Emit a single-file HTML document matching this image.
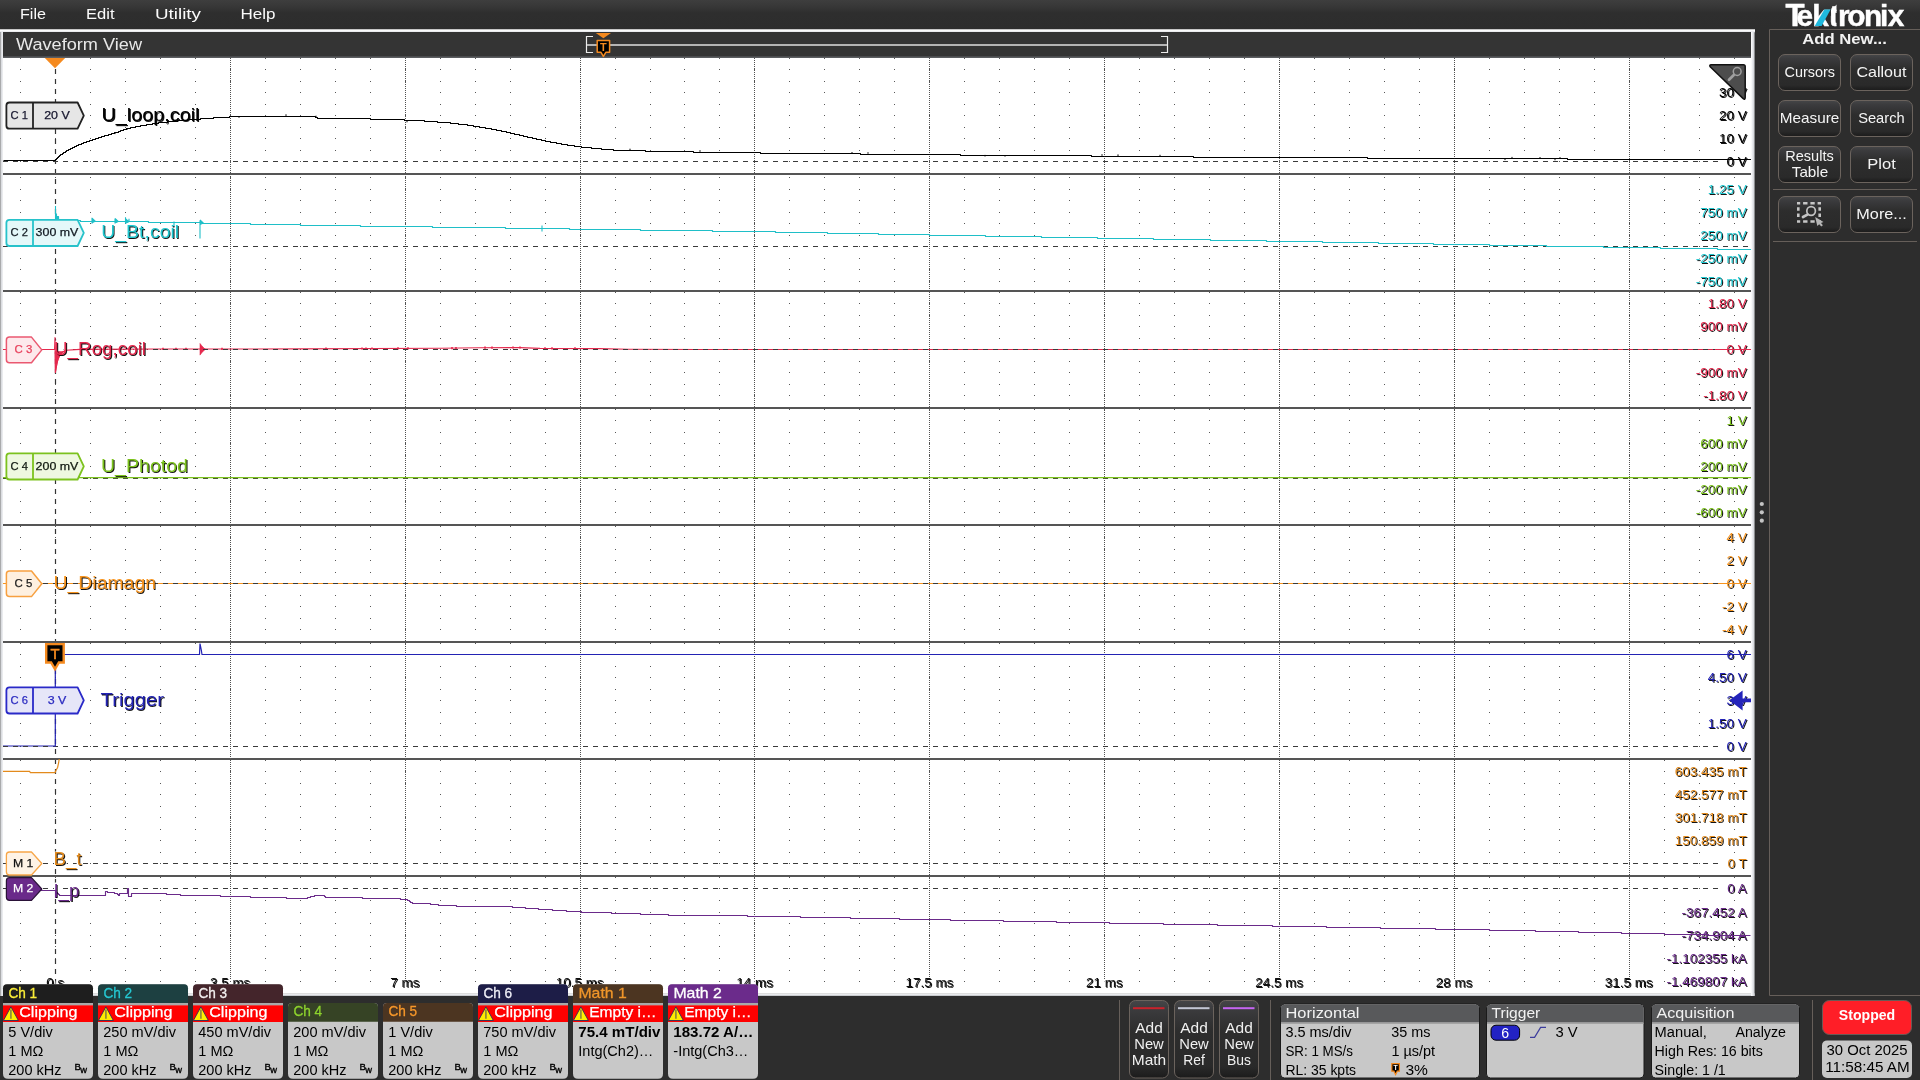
<!DOCTYPE html>
<html lang="en"><head><meta charset="utf-8"><title>Waveform View</title>
<style>
html,body{margin:0;padding:0;background:#2d2d2d;width:1920px;height:1080px;overflow:hidden}
svg{display:block;position:absolute;left:0;top:0;will-change:transform}
text{font-family:"Liberation Sans","DejaVu Sans",sans-serif;white-space:pre}
</style></head><body>
<svg width="1920" height="1080" viewBox="0 0 1920 1080">
<defs>
<linearGradient id="gMenu" x1="0" y1="0" x2="0" y2="1"><stop offset="0" stop-color="#3e3e3e"/><stop offset="0.2" stop-color="#383838"/><stop offset="0.45" stop-color="#2e2e2e"/><stop offset="1" stop-color="#2d2d2d"/></linearGradient>
<linearGradient id="gBtn" x1="0" y1="0" x2="0" y2="1"><stop offset="0" stop-color="#454648"/><stop offset="0.12" stop-color="#3b3b3d"/><stop offset="0.4" stop-color="#2d2d2d"/><stop offset="0.85" stop-color="#2a2a2a"/><stop offset="1" stop-color="#1b1b1b"/></linearGradient>
<linearGradient id="gTop" x1="0" y1="0" x2="0" y2="1"><stop offset="0" stop-color="#9a9a9a"/><stop offset="0.35" stop-color="#ffffff"/><stop offset="1" stop-color="#dfe1e6"/></linearGradient>
<linearGradient id="gLeft" x1="0" y1="0" x2="1" y2="0"><stop offset="0" stop-color="#8c8c8c"/><stop offset="0.4" stop-color="#d8dade"/><stop offset="1" stop-color="#f4f5f7"/></linearGradient>
<linearGradient id="gRight" x1="0" y1="0" x2="1" y2="0"><stop offset="0" stop-color="#ffffff"/><stop offset="0.5" stop-color="#e4e6ea"/><stop offset="1" stop-color="#c8cace"/></linearGradient>
<linearGradient id="gBot" x1="0" y1="0" x2="0" y2="1"><stop offset="0" stop-color="#ffffff"/><stop offset="0.5" stop-color="#e4e6ea"/><stop offset="1" stop-color="#b8babd"/></linearGradient>
<clipPath id="cpPlot"><rect x="3" y="58" width="1748" height="936"/></clipPath>
</defs>
<rect x="0" y="0" width="1920" height="1080" fill="#2d2d2d"/>
<g id="menu-bar">
<rect x="0" y="0" width="1920" height="29" fill="url(#gMenu)"/>
<text x="20" y="18.8" font-size="15.18" fill="#fafafa" textLength="26" lengthAdjust="spacingAndGlyphs">File</text>
<text x="86" y="18.8" font-size="15.18" fill="#fafafa" textLength="28.5" lengthAdjust="spacingAndGlyphs">Edit</text>
<text x="155" y="18.8" font-size="15.18" fill="#fafafa" textLength="46" lengthAdjust="spacingAndGlyphs">Utility</text>
<text x="240.5" y="18.8" font-size="15.18" fill="#fafafa" textLength="35" lengthAdjust="spacingAndGlyphs">Help</text>
</g>
<g id="waveform-view">
<rect x="0" y="993.4" width="1754.6" height="2.6" fill="url(#gBot)"/>
<rect x="0" y="29" width="1755" height="3.3" fill="url(#gTop)"/>
<rect x="0" y="32" width="3.2" height="964" fill="url(#gLeft)"/>
<rect x="1751" y="32" width="3.6" height="964" fill="url(#gRight)"/>
<rect x="3" y="32" width="1748" height="25" fill="#343434"/>
<rect x="3" y="56.4" width="1748" height="1.6" fill="#5b5d60"/>
<rect x="3" y="58" width="1748" height="935.6" fill="#ffffff"/>
<text x="16" y="50" font-size="17.16" fill="#e8e8e8" textLength="126" lengthAdjust="spacingAndGlyphs">Waveform View</text>
<path d="M593,36.5H586.5V52.5H593" fill="none" stroke="#ececec" stroke-width="1.2"/>
<path d="M1161,36.5H1167.5V52.5H1161" fill="none" stroke="#ececec" stroke-width="1.2"/>
<rect x="587" y="44" width="580" height="2" fill="#b4b4b4"/>
<path d="M595.8,33H611L603.4,38.2Z" fill="#f58a1f"/>
<path d="M597.2,40.6H609.6V52.2H606L603.4,56.4L600.8,52.2H597.2Z" fill="#000" stroke="#f58a1f" stroke-width="1.5" stroke-linejoin="round"/>
<text x="603.4" y="50.6" font-size="10.92" fill="#f58a1f" text-anchor="middle" font-weight="700">T</text>
<g clip-path="url(#cpPlot)">
<path id="dr" d="M20,58.5h1m34,0h1m34,0h1m34,0h1m34,0h1m34,0h1m34,0h1m34,0h1m34,0h1m34,0h1m34,0h1m34,0h1m34,0h1m34,0h1m34,0h1m34,0h1m34,0h1m34,0h1m34,0h1m33,0h1m34,0h1m34,0h1m34,0h1m34,0h1m34,0h1m34,0h1m34,0h1m34,0h1m34,0h1m34,0h1m34,0h1m34,0h1m34,0h1m34,0h1m34,0h1m34,0h1m34,0h1m34,0h1m34,0h1m34,0h1m34,0h1m34,0h1m34,0h1m34,0h1m34,0h1m34,0h1m34,0h1m34,0h1m34,0h1m34,0h1" stroke="#585858" stroke-width="1" fill="none" shape-rendering="crispEdges"/>
<use href="#dr" y="11"/>
<use href="#dr" y="23"/>
<use href="#dr" y="34"/>
<use href="#dr" y="46"/>
<use href="#dr" y="57"/>
<use href="#dr" y="69"/>
<use href="#dr" y="80"/>
<use href="#dr" y="92"/>
<use href="#dr" y="103"/>
<use href="#dr" y="115"/>
<use href="#dr" y="119"/>
<use href="#dr" y="131"/>
<use href="#dr" y="142"/>
<use href="#dr" y="154"/>
<use href="#dr" y="165"/>
<use href="#dr" y="177"/>
<use href="#dr" y="188"/>
<use href="#dr" y="200"/>
<use href="#dr" y="211"/>
<use href="#dr" y="223"/>
<use href="#dr" y="234"/>
<use href="#dr" y="245"/>
<use href="#dr" y="257"/>
<use href="#dr" y="268"/>
<use href="#dr" y="280"/>
<use href="#dr" y="291"/>
<use href="#dr" y="303"/>
<use href="#dr" y="314"/>
<use href="#dr" y="326"/>
<use href="#dr" y="337"/>
<use href="#dr" y="349"/>
<use href="#dr" y="351"/>
<use href="#dr" y="362"/>
<use href="#dr" y="374"/>
<use href="#dr" y="385"/>
<use href="#dr" y="397"/>
<use href="#dr" y="408"/>
<use href="#dr" y="420"/>
<use href="#dr" y="431"/>
<use href="#dr" y="443"/>
<use href="#dr" y="454"/>
<use href="#dr" y="466"/>
<use href="#dr" y="468"/>
<use href="#dr" y="479"/>
<use href="#dr" y="491"/>
<use href="#dr" y="502"/>
<use href="#dr" y="514"/>
<use href="#dr" y="525"/>
<use href="#dr" y="537"/>
<use href="#dr" y="548"/>
<use href="#dr" y="560"/>
<use href="#dr" y="571"/>
<use href="#dr" y="583"/>
<use href="#dr" y="585"/>
<use href="#dr" y="596"/>
<use href="#dr" y="608"/>
<use href="#dr" y="619"/>
<use href="#dr" y="631"/>
<use href="#dr" y="642"/>
<use href="#dr" y="654"/>
<use href="#dr" y="665"/>
<use href="#dr" y="677"/>
<use href="#dr" y="688"/>
<use href="#dr" y="700"/>
<use href="#dr" y="702"/>
<use href="#dr" y="713"/>
<use href="#dr" y="725"/>
<use href="#dr" y="736"/>
<use href="#dr" y="748"/>
<use href="#dr" y="759"/>
<use href="#dr" y="771"/>
<use href="#dr" y="782"/>
<use href="#dr" y="794"/>
<use href="#dr" y="805"/>
<use href="#dr" y="817"/>
<use href="#dr" y="819"/>
<use href="#dr" y="830"/>
<use href="#dr" y="842"/>
<use href="#dr" y="854"/>
<use href="#dr" y="865"/>
<use href="#dr" y="877"/>
<use href="#dr" y="888"/>
<use href="#dr" y="900"/>
<use href="#dr" y="912"/>
<use href="#dr" y="923"/>
<path d="M230.5,58V979M405.5,58V979M580.5,58V979M754.5,58V979M929.5,58V979M1104.5,58V979M1279.5,58V979M1454.5,58V979M1629.5,58V979" stroke="#505050" stroke-width="1" stroke-dasharray="1 1" fill="none" shape-rendering="crispEdges"/>
<path d="M55.5,69V993" stroke="#333" stroke-width="1.2" stroke-dasharray="5 5" fill="none"/>
<rect x="3" y="173" width="1748" height="2" fill="#555555"/>
<rect x="3" y="290" width="1748" height="2" fill="#555555"/>
<rect x="3" y="407" width="1748" height="2" fill="#555555"/>
<rect x="3" y="524" width="1748" height="2" fill="#555555"/>
<rect x="3" y="641" width="1748" height="2" fill="#555555"/>
<rect x="3" y="758" width="1748" height="2" fill="#555555"/>
<rect x="3" y="875" width="1748" height="2" fill="#555555"/>
<path d="M44.8,58H65.2L55,68.2Z" fill="#f58a1f"/>
</g>
<g clip-path="url(#cpPlot)">
<path d="M3,161.5H1718M3,246.5H1751M3,349.5H1718M3,478.5H1751M3,583.5H1718M3,746.5H1718M3,863.5H1718M3,888.5H1718" stroke="#3a3a3a" stroke-width="1" stroke-dasharray="5 5" fill="none" shape-rendering="crispEdges"/>
</g>
<g>
<text x="1747.25" y="97.55" font-size="13.1" text-anchor="end" textLength="27.735" lengthAdjust="spacingAndGlyphs" fill="#fff" stroke="#fff" stroke-width="3.4" stroke-linejoin="round" aria-hidden="true">30 V</text>
<text x="1747.7" y="98" font-size="13.1" text-anchor="end" textLength="27.735" lengthAdjust="spacingAndGlyphs" fill="#000" fill-opacity="0.92" aria-hidden="true">30 V</text>
<text x="1746.8" y="97.1" font-size="13.1" text-anchor="end" textLength="27.735" lengthAdjust="spacingAndGlyphs" fill="#000000">30 V</text>
<text x="1747.25" y="120.55" font-size="13.1" text-anchor="end" textLength="27.735" lengthAdjust="spacingAndGlyphs" fill="#fff" stroke="#fff" stroke-width="3.4" stroke-linejoin="round" aria-hidden="true">20 V</text>
<text x="1747.7" y="121" font-size="13.1" text-anchor="end" textLength="27.735" lengthAdjust="spacingAndGlyphs" fill="#000" fill-opacity="0.92" aria-hidden="true">20 V</text>
<text x="1746.8" y="120.1" font-size="13.1" text-anchor="end" textLength="27.735" lengthAdjust="spacingAndGlyphs" fill="#000000">20 V</text>
<text x="1747.25" y="143.55" font-size="13.1" text-anchor="end" textLength="27.735" lengthAdjust="spacingAndGlyphs" fill="#fff" stroke="#fff" stroke-width="3.4" stroke-linejoin="round" aria-hidden="true">10 V</text>
<text x="1747.7" y="144" font-size="13.1" text-anchor="end" textLength="27.735" lengthAdjust="spacingAndGlyphs" fill="#000" fill-opacity="0.92" aria-hidden="true">10 V</text>
<text x="1746.8" y="143.1" font-size="13.1" text-anchor="end" textLength="27.735" lengthAdjust="spacingAndGlyphs" fill="#000000">10 V</text>
<text x="1747.25" y="166.55" font-size="13.1" text-anchor="end" textLength="20.2367" lengthAdjust="spacingAndGlyphs" fill="#fff" stroke="#fff" stroke-width="3.4" stroke-linejoin="round" aria-hidden="true">0 V</text>
<text x="1747.7" y="167" font-size="13.1" text-anchor="end" textLength="20.2367" lengthAdjust="spacingAndGlyphs" fill="#000" fill-opacity="0.92" aria-hidden="true">0 V</text>
<text x="1746.8" y="166.1" font-size="13.1" text-anchor="end" textLength="20.2367" lengthAdjust="spacingAndGlyphs" fill="#000000">0 V</text>
<text x="1747.25" y="194.55" font-size="13.1" text-anchor="end" textLength="38.9788" lengthAdjust="spacingAndGlyphs" fill="#fff" stroke="#fff" stroke-width="3.4" stroke-linejoin="round" aria-hidden="true">1.25 V</text>
<text x="1747.7" y="195" font-size="13.1" text-anchor="end" textLength="38.9788" lengthAdjust="spacingAndGlyphs" fill="#000" fill-opacity="0.92" aria-hidden="true">1.25 V</text>
<text x="1746.8" y="194.1" font-size="13.1" text-anchor="end" textLength="38.9788" lengthAdjust="spacingAndGlyphs" fill="#1fc6ce">1.25 V</text>
<text x="1747.25" y="217.55" font-size="13.1" text-anchor="end" textLength="46.4644" lengthAdjust="spacingAndGlyphs" fill="#fff" stroke="#fff" stroke-width="3.4" stroke-linejoin="round" aria-hidden="true">750 mV</text>
<text x="1747.7" y="218" font-size="13.1" text-anchor="end" textLength="46.4644" lengthAdjust="spacingAndGlyphs" fill="#000" fill-opacity="0.92" aria-hidden="true">750 mV</text>
<text x="1746.8" y="217.1" font-size="13.1" text-anchor="end" textLength="46.4644" lengthAdjust="spacingAndGlyphs" fill="#1fc6ce">750 mV</text>
<text x="1747.25" y="240.55" font-size="13.1" text-anchor="end" textLength="46.4644" lengthAdjust="spacingAndGlyphs" fill="#fff" stroke="#fff" stroke-width="3.4" stroke-linejoin="round" aria-hidden="true">250 mV</text>
<text x="1747.7" y="241" font-size="13.1" text-anchor="end" textLength="46.4644" lengthAdjust="spacingAndGlyphs" fill="#000" fill-opacity="0.92" aria-hidden="true">250 mV</text>
<text x="1746.8" y="240.1" font-size="13.1" text-anchor="end" textLength="46.4644" lengthAdjust="spacingAndGlyphs" fill="#1fc6ce">250 mV</text>
<text x="1747.25" y="263.55" font-size="13.1" text-anchor="end" textLength="50.9546" lengthAdjust="spacingAndGlyphs" fill="#fff" stroke="#fff" stroke-width="3.4" stroke-linejoin="round" aria-hidden="true">-250 mV</text>
<text x="1747.7" y="264" font-size="13.1" text-anchor="end" textLength="50.9546" lengthAdjust="spacingAndGlyphs" fill="#000" fill-opacity="0.92" aria-hidden="true">-250 mV</text>
<text x="1746.8" y="263.1" font-size="13.1" text-anchor="end" textLength="50.9546" lengthAdjust="spacingAndGlyphs" fill="#1fc6ce">-250 mV</text>
<text x="1747.25" y="286.55" font-size="13.1" text-anchor="end" textLength="50.9546" lengthAdjust="spacingAndGlyphs" fill="#fff" stroke="#fff" stroke-width="3.4" stroke-linejoin="round" aria-hidden="true">-750 mV</text>
<text x="1747.7" y="287" font-size="13.1" text-anchor="end" textLength="50.9546" lengthAdjust="spacingAndGlyphs" fill="#000" fill-opacity="0.92" aria-hidden="true">-750 mV</text>
<text x="1746.8" y="286.1" font-size="13.1" text-anchor="end" textLength="50.9546" lengthAdjust="spacingAndGlyphs" fill="#1fc6ce">-750 mV</text>
<text x="1747.25" y="308.55" font-size="13.1" text-anchor="end" textLength="38.9788" lengthAdjust="spacingAndGlyphs" fill="#fff" stroke="#fff" stroke-width="3.4" stroke-linejoin="round" aria-hidden="true">1.80 V</text>
<text x="1747.7" y="309" font-size="13.1" text-anchor="end" textLength="38.9788" lengthAdjust="spacingAndGlyphs" fill="#000" fill-opacity="0.92" aria-hidden="true">1.80 V</text>
<text x="1746.8" y="308.1" font-size="13.1" text-anchor="end" textLength="38.9788" lengthAdjust="spacingAndGlyphs" fill="#e5294e">1.80 V</text>
<text x="1747.25" y="331.55" font-size="13.1" text-anchor="end" textLength="46.4644" lengthAdjust="spacingAndGlyphs" fill="#fff" stroke="#fff" stroke-width="3.4" stroke-linejoin="round" aria-hidden="true">900 mV</text>
<text x="1747.7" y="332" font-size="13.1" text-anchor="end" textLength="46.4644" lengthAdjust="spacingAndGlyphs" fill="#000" fill-opacity="0.92" aria-hidden="true">900 mV</text>
<text x="1746.8" y="331.1" font-size="13.1" text-anchor="end" textLength="46.4644" lengthAdjust="spacingAndGlyphs" fill="#e5294e">900 mV</text>
<text x="1747.25" y="354.55" font-size="13.1" text-anchor="end" textLength="20.2367" lengthAdjust="spacingAndGlyphs" fill="#fff" stroke="#fff" stroke-width="3.4" stroke-linejoin="round" aria-hidden="true">0 V</text>
<text x="1747.7" y="355" font-size="13.1" text-anchor="end" textLength="20.2367" lengthAdjust="spacingAndGlyphs" fill="#000" fill-opacity="0.92" aria-hidden="true">0 V</text>
<text x="1746.8" y="354.1" font-size="13.1" text-anchor="end" textLength="20.2367" lengthAdjust="spacingAndGlyphs" fill="#e5294e">0 V</text>
<text x="1747.25" y="377.55" font-size="13.1" text-anchor="end" textLength="50.9546" lengthAdjust="spacingAndGlyphs" fill="#fff" stroke="#fff" stroke-width="3.4" stroke-linejoin="round" aria-hidden="true">-900 mV</text>
<text x="1747.7" y="378" font-size="13.1" text-anchor="end" textLength="50.9546" lengthAdjust="spacingAndGlyphs" fill="#000" fill-opacity="0.92" aria-hidden="true">-900 mV</text>
<text x="1746.8" y="377.1" font-size="13.1" text-anchor="end" textLength="50.9546" lengthAdjust="spacingAndGlyphs" fill="#e5294e">-900 mV</text>
<text x="1747.25" y="400.55" font-size="13.1" text-anchor="end" textLength="43.4689" lengthAdjust="spacingAndGlyphs" fill="#fff" stroke="#fff" stroke-width="3.4" stroke-linejoin="round" aria-hidden="true">-1.80 V</text>
<text x="1747.7" y="401" font-size="13.1" text-anchor="end" textLength="43.4689" lengthAdjust="spacingAndGlyphs" fill="#000" fill-opacity="0.92" aria-hidden="true">-1.80 V</text>
<text x="1746.8" y="400.1" font-size="13.1" text-anchor="end" textLength="43.4689" lengthAdjust="spacingAndGlyphs" fill="#e5294e">-1.80 V</text>
<text x="1747.25" y="425.55" font-size="13.1" text-anchor="end" textLength="20.2367" lengthAdjust="spacingAndGlyphs" fill="#fff" stroke="#fff" stroke-width="3.4" stroke-linejoin="round" aria-hidden="true">1 V</text>
<text x="1747.7" y="426" font-size="13.1" text-anchor="end" textLength="20.2367" lengthAdjust="spacingAndGlyphs" fill="#000" fill-opacity="0.92" aria-hidden="true">1 V</text>
<text x="1746.8" y="425.1" font-size="13.1" text-anchor="end" textLength="20.2367" lengthAdjust="spacingAndGlyphs" fill="#7cc21e">1 V</text>
<text x="1747.25" y="448.55" font-size="13.1" text-anchor="end" textLength="46.4644" lengthAdjust="spacingAndGlyphs" fill="#fff" stroke="#fff" stroke-width="3.4" stroke-linejoin="round" aria-hidden="true">600 mV</text>
<text x="1747.7" y="449" font-size="13.1" text-anchor="end" textLength="46.4644" lengthAdjust="spacingAndGlyphs" fill="#000" fill-opacity="0.92" aria-hidden="true">600 mV</text>
<text x="1746.8" y="448.1" font-size="13.1" text-anchor="end" textLength="46.4644" lengthAdjust="spacingAndGlyphs" fill="#7cc21e">600 mV</text>
<text x="1747.25" y="471.55" font-size="13.1" text-anchor="end" textLength="46.4644" lengthAdjust="spacingAndGlyphs" fill="#fff" stroke="#fff" stroke-width="3.4" stroke-linejoin="round" aria-hidden="true">200 mV</text>
<text x="1747.7" y="472" font-size="13.1" text-anchor="end" textLength="46.4644" lengthAdjust="spacingAndGlyphs" fill="#000" fill-opacity="0.92" aria-hidden="true">200 mV</text>
<text x="1746.8" y="471.1" font-size="13.1" text-anchor="end" textLength="46.4644" lengthAdjust="spacingAndGlyphs" fill="#7cc21e">200 mV</text>
<text x="1747.25" y="494.55" font-size="13.1" text-anchor="end" textLength="50.9546" lengthAdjust="spacingAndGlyphs" fill="#fff" stroke="#fff" stroke-width="3.4" stroke-linejoin="round" aria-hidden="true">-200 mV</text>
<text x="1747.7" y="495" font-size="13.1" text-anchor="end" textLength="50.9546" lengthAdjust="spacingAndGlyphs" fill="#000" fill-opacity="0.92" aria-hidden="true">-200 mV</text>
<text x="1746.8" y="494.1" font-size="13.1" text-anchor="end" textLength="50.9546" lengthAdjust="spacingAndGlyphs" fill="#7cc21e">-200 mV</text>
<text x="1747.25" y="517.55" font-size="13.1" text-anchor="end" textLength="50.9546" lengthAdjust="spacingAndGlyphs" fill="#fff" stroke="#fff" stroke-width="3.4" stroke-linejoin="round" aria-hidden="true">-600 mV</text>
<text x="1747.7" y="518" font-size="13.1" text-anchor="end" textLength="50.9546" lengthAdjust="spacingAndGlyphs" fill="#000" fill-opacity="0.92" aria-hidden="true">-600 mV</text>
<text x="1746.8" y="517.1" font-size="13.1" text-anchor="end" textLength="50.9546" lengthAdjust="spacingAndGlyphs" fill="#7cc21e">-600 mV</text>
<text x="1747.25" y="542.55" font-size="13.1" text-anchor="end" textLength="20.2367" lengthAdjust="spacingAndGlyphs" fill="#fff" stroke="#fff" stroke-width="3.4" stroke-linejoin="round" aria-hidden="true">4 V</text>
<text x="1747.7" y="543" font-size="13.1" text-anchor="end" textLength="20.2367" lengthAdjust="spacingAndGlyphs" fill="#000" fill-opacity="0.92" aria-hidden="true">4 V</text>
<text x="1746.8" y="542.1" font-size="13.1" text-anchor="end" textLength="20.2367" lengthAdjust="spacingAndGlyphs" fill="#f7941e">4 V</text>
<text x="1747.25" y="565.55" font-size="13.1" text-anchor="end" textLength="20.2367" lengthAdjust="spacingAndGlyphs" fill="#fff" stroke="#fff" stroke-width="3.4" stroke-linejoin="round" aria-hidden="true">2 V</text>
<text x="1747.7" y="566" font-size="13.1" text-anchor="end" textLength="20.2367" lengthAdjust="spacingAndGlyphs" fill="#000" fill-opacity="0.92" aria-hidden="true">2 V</text>
<text x="1746.8" y="565.1" font-size="13.1" text-anchor="end" textLength="20.2367" lengthAdjust="spacingAndGlyphs" fill="#f7941e">2 V</text>
<text x="1747.25" y="588.55" font-size="13.1" text-anchor="end" textLength="20.2367" lengthAdjust="spacingAndGlyphs" fill="#fff" stroke="#fff" stroke-width="3.4" stroke-linejoin="round" aria-hidden="true">0 V</text>
<text x="1747.7" y="589" font-size="13.1" text-anchor="end" textLength="20.2367" lengthAdjust="spacingAndGlyphs" fill="#000" fill-opacity="0.92" aria-hidden="true">0 V</text>
<text x="1746.8" y="588.1" font-size="13.1" text-anchor="end" textLength="20.2367" lengthAdjust="spacingAndGlyphs" fill="#f7941e">0 V</text>
<text x="1747.25" y="611.55" font-size="13.1" text-anchor="end" textLength="24.7268" lengthAdjust="spacingAndGlyphs" fill="#fff" stroke="#fff" stroke-width="3.4" stroke-linejoin="round" aria-hidden="true">-2 V</text>
<text x="1747.7" y="612" font-size="13.1" text-anchor="end" textLength="24.7268" lengthAdjust="spacingAndGlyphs" fill="#000" fill-opacity="0.92" aria-hidden="true">-2 V</text>
<text x="1746.8" y="611.1" font-size="13.1" text-anchor="end" textLength="24.7268" lengthAdjust="spacingAndGlyphs" fill="#f7941e">-2 V</text>
<text x="1747.25" y="634.55" font-size="13.1" text-anchor="end" textLength="24.7268" lengthAdjust="spacingAndGlyphs" fill="#fff" stroke="#fff" stroke-width="3.4" stroke-linejoin="round" aria-hidden="true">-4 V</text>
<text x="1747.7" y="635" font-size="13.1" text-anchor="end" textLength="24.7268" lengthAdjust="spacingAndGlyphs" fill="#000" fill-opacity="0.92" aria-hidden="true">-4 V</text>
<text x="1746.8" y="634.1" font-size="13.1" text-anchor="end" textLength="24.7268" lengthAdjust="spacingAndGlyphs" fill="#f7941e">-4 V</text>
<text x="1747.25" y="659.55" font-size="13.1" text-anchor="end" textLength="20.2367" lengthAdjust="spacingAndGlyphs" fill="#fff" stroke="#fff" stroke-width="3.4" stroke-linejoin="round" aria-hidden="true">6 V</text>
<text x="1747.7" y="660" font-size="13.1" text-anchor="end" textLength="20.2367" lengthAdjust="spacingAndGlyphs" fill="#000" fill-opacity="0.92" aria-hidden="true">6 V</text>
<text x="1746.8" y="659.1" font-size="13.1" text-anchor="end" textLength="20.2367" lengthAdjust="spacingAndGlyphs" fill="#2323b4">6 V</text>
<text x="1747.25" y="682.55" font-size="13.1" text-anchor="end" textLength="38.9788" lengthAdjust="spacingAndGlyphs" fill="#fff" stroke="#fff" stroke-width="3.4" stroke-linejoin="round" aria-hidden="true">4.50 V</text>
<text x="1747.7" y="683" font-size="13.1" text-anchor="end" textLength="38.9788" lengthAdjust="spacingAndGlyphs" fill="#000" fill-opacity="0.92" aria-hidden="true">4.50 V</text>
<text x="1746.8" y="682.1" font-size="13.1" text-anchor="end" textLength="38.9788" lengthAdjust="spacingAndGlyphs" fill="#2323b4">4.50 V</text>
<text x="1747.25" y="705.55" font-size="13.1" text-anchor="end" textLength="20.2367" lengthAdjust="spacingAndGlyphs" fill="#fff" stroke="#fff" stroke-width="3.4" stroke-linejoin="round" aria-hidden="true">3 V</text>
<text x="1747.7" y="706" font-size="13.1" text-anchor="end" textLength="20.2367" lengthAdjust="spacingAndGlyphs" fill="#000" fill-opacity="0.92" aria-hidden="true">3 V</text>
<text x="1746.8" y="705.1" font-size="13.1" text-anchor="end" textLength="20.2367" lengthAdjust="spacingAndGlyphs" fill="#2323b4">3 V</text>
<text x="1747.25" y="728.55" font-size="13.1" text-anchor="end" textLength="38.9788" lengthAdjust="spacingAndGlyphs" fill="#fff" stroke="#fff" stroke-width="3.4" stroke-linejoin="round" aria-hidden="true">1.50 V</text>
<text x="1747.7" y="729" font-size="13.1" text-anchor="end" textLength="38.9788" lengthAdjust="spacingAndGlyphs" fill="#000" fill-opacity="0.92" aria-hidden="true">1.50 V</text>
<text x="1746.8" y="728.1" font-size="13.1" text-anchor="end" textLength="38.9788" lengthAdjust="spacingAndGlyphs" fill="#2323b4">1.50 V</text>
<text x="1747.25" y="751.55" font-size="13.1" text-anchor="end" textLength="20.2367" lengthAdjust="spacingAndGlyphs" fill="#fff" stroke="#fff" stroke-width="3.4" stroke-linejoin="round" aria-hidden="true">0 V</text>
<text x="1747.7" y="752" font-size="13.1" text-anchor="end" textLength="20.2367" lengthAdjust="spacingAndGlyphs" fill="#000" fill-opacity="0.92" aria-hidden="true">0 V</text>
<text x="1746.8" y="751.1" font-size="13.1" text-anchor="end" textLength="20.2367" lengthAdjust="spacingAndGlyphs" fill="#2323b4">0 V</text>
<text x="1747.25" y="776.55" font-size="13.1" text-anchor="end" textLength="71.9475" lengthAdjust="spacingAndGlyphs" fill="#fff" stroke="#fff" stroke-width="3.4" stroke-linejoin="round" aria-hidden="true">603.435 mT</text>
<text x="1747.7" y="777" font-size="13.1" text-anchor="end" textLength="71.9475" lengthAdjust="spacingAndGlyphs" fill="#000" fill-opacity="0.92" aria-hidden="true">603.435 mT</text>
<text x="1746.8" y="776.1" font-size="13.1" text-anchor="end" textLength="71.9475" lengthAdjust="spacingAndGlyphs" fill="#e38a1c">603.435 mT</text>
<text x="1747.25" y="799.55" font-size="13.1" text-anchor="end" textLength="71.9475" lengthAdjust="spacingAndGlyphs" fill="#fff" stroke="#fff" stroke-width="3.4" stroke-linejoin="round" aria-hidden="true">452.577 mT</text>
<text x="1747.7" y="800" font-size="13.1" text-anchor="end" textLength="71.9475" lengthAdjust="spacingAndGlyphs" fill="#000" fill-opacity="0.92" aria-hidden="true">452.577 mT</text>
<text x="1746.8" y="799.1" font-size="13.1" text-anchor="end" textLength="71.9475" lengthAdjust="spacingAndGlyphs" fill="#e38a1c">452.577 mT</text>
<text x="1747.25" y="822.55" font-size="13.1" text-anchor="end" textLength="71.9475" lengthAdjust="spacingAndGlyphs" fill="#fff" stroke="#fff" stroke-width="3.4" stroke-linejoin="round" aria-hidden="true">301.718 mT</text>
<text x="1747.7" y="823" font-size="13.1" text-anchor="end" textLength="71.9475" lengthAdjust="spacingAndGlyphs" fill="#000" fill-opacity="0.92" aria-hidden="true">301.718 mT</text>
<text x="1746.8" y="822.1" font-size="13.1" text-anchor="end" textLength="71.9475" lengthAdjust="spacingAndGlyphs" fill="#e38a1c">301.718 mT</text>
<text x="1747.25" y="845.55" font-size="13.1" text-anchor="end" textLength="71.9475" lengthAdjust="spacingAndGlyphs" fill="#fff" stroke="#fff" stroke-width="3.4" stroke-linejoin="round" aria-hidden="true">150.859 mT</text>
<text x="1747.7" y="846" font-size="13.1" text-anchor="end" textLength="71.9475" lengthAdjust="spacingAndGlyphs" fill="#000" fill-opacity="0.92" aria-hidden="true">150.859 mT</text>
<text x="1746.8" y="845.1" font-size="13.1" text-anchor="end" textLength="71.9475" lengthAdjust="spacingAndGlyphs" fill="#e38a1c">150.859 mT</text>
<text x="1747.25" y="868.55" font-size="13.1" text-anchor="end" textLength="19.2361" lengthAdjust="spacingAndGlyphs" fill="#fff" stroke="#fff" stroke-width="3.4" stroke-linejoin="round" aria-hidden="true">0 T</text>
<text x="1747.7" y="869" font-size="13.1" text-anchor="end" textLength="19.2361" lengthAdjust="spacingAndGlyphs" fill="#000" fill-opacity="0.92" aria-hidden="true">0 T</text>
<text x="1746.8" y="868.1" font-size="13.1" text-anchor="end" textLength="19.2361" lengthAdjust="spacingAndGlyphs" fill="#e38a1c">0 T</text>
<text x="1747.25" y="893.55" font-size="13.1" text-anchor="end" textLength="19.4931" lengthAdjust="spacingAndGlyphs" fill="#fff" stroke="#fff" stroke-width="3.4" stroke-linejoin="round" aria-hidden="true">0 A</text>
<text x="1747.7" y="894" font-size="13.1" text-anchor="end" textLength="19.4931" lengthAdjust="spacingAndGlyphs" fill="#000" fill-opacity="0.92" aria-hidden="true">0 A</text>
<text x="1746.8" y="893.1" font-size="13.1" text-anchor="end" textLength="19.4931" lengthAdjust="spacingAndGlyphs" fill="#6a2a8a">0 A</text>
<text x="1747.25" y="917.55" font-size="13.1" text-anchor="end" textLength="65.2202" lengthAdjust="spacingAndGlyphs" fill="#fff" stroke="#fff" stroke-width="3.4" stroke-linejoin="round" aria-hidden="true">-367.452 A</text>
<text x="1747.7" y="918" font-size="13.1" text-anchor="end" textLength="65.2202" lengthAdjust="spacingAndGlyphs" fill="#000" fill-opacity="0.92" aria-hidden="true">-367.452 A</text>
<text x="1746.8" y="917.1" font-size="13.1" text-anchor="end" textLength="65.2202" lengthAdjust="spacingAndGlyphs" fill="#6a2a8a">-367.452 A</text>
<text x="1747.25" y="940.55" font-size="13.1" text-anchor="end" textLength="65.2202" lengthAdjust="spacingAndGlyphs" fill="#fff" stroke="#fff" stroke-width="3.4" stroke-linejoin="round" aria-hidden="true">-734.904 A</text>
<text x="1747.7" y="941" font-size="13.1" text-anchor="end" textLength="65.2202" lengthAdjust="spacingAndGlyphs" fill="#000" fill-opacity="0.92" aria-hidden="true">-734.904 A</text>
<text x="1746.8" y="940.1" font-size="13.1" text-anchor="end" textLength="65.2202" lengthAdjust="spacingAndGlyphs" fill="#6a2a8a">-734.904 A</text>
<text x="1747.25" y="963.55" font-size="13.1" text-anchor="end" textLength="80.2032" lengthAdjust="spacingAndGlyphs" fill="#fff" stroke="#fff" stroke-width="3.4" stroke-linejoin="round" aria-hidden="true">-1.102355 kA</text>
<text x="1747.7" y="964" font-size="13.1" text-anchor="end" textLength="80.2032" lengthAdjust="spacingAndGlyphs" fill="#000" fill-opacity="0.92" aria-hidden="true">-1.102355 kA</text>
<text x="1746.8" y="963.1" font-size="13.1" text-anchor="end" textLength="80.2032" lengthAdjust="spacingAndGlyphs" fill="#6a2a8a">-1.102355 kA</text>
<text x="1747.25" y="986.85" font-size="13.1" text-anchor="end" textLength="80.2032" lengthAdjust="spacingAndGlyphs" fill="#fff" stroke="#fff" stroke-width="3.4" stroke-linejoin="round" aria-hidden="true">-1.469807 kA</text>
<text x="1747.7" y="987.3" font-size="13.1" text-anchor="end" textLength="80.2032" lengthAdjust="spacingAndGlyphs" fill="#000" fill-opacity="0.92" aria-hidden="true">-1.469807 kA</text>
<text x="1746.8" y="986.4" font-size="13.1" text-anchor="end" textLength="80.2032" lengthAdjust="spacingAndGlyphs" fill="#6a2a8a">-1.469807 kA</text>
<text x="55.75" y="987.55" font-size="13.1" text-anchor="middle" textLength="17.9848" lengthAdjust="spacingAndGlyphs" fill="#fff" stroke="#fff" stroke-width="3.4" stroke-linejoin="round" aria-hidden="true">0 s</text>
<text x="56.2" y="988" font-size="13.1" text-anchor="middle" textLength="17.9848" lengthAdjust="spacingAndGlyphs" fill="#000" fill-opacity="0.92" aria-hidden="true">0 s</text>
<text x="55.3" y="987.1" font-size="13.1" text-anchor="middle" textLength="17.9848" lengthAdjust="spacingAndGlyphs" fill="#111">0 s</text>
<text x="230.59" y="987.55" font-size="13.1" text-anchor="middle" textLength="40.4597" lengthAdjust="spacingAndGlyphs" fill="#fff" stroke="#fff" stroke-width="3.4" stroke-linejoin="round" aria-hidden="true">3.5 ms</text>
<text x="231.04" y="988" font-size="13.1" text-anchor="middle" textLength="40.4597" lengthAdjust="spacingAndGlyphs" fill="#000" fill-opacity="0.92" aria-hidden="true">3.5 ms</text>
<text x="230.14" y="987.1" font-size="13.1" text-anchor="middle" textLength="40.4597" lengthAdjust="spacingAndGlyphs" fill="#111">3.5 ms</text>
<text x="405.43" y="987.55" font-size="13.1" text-anchor="middle" textLength="29.2159" lengthAdjust="spacingAndGlyphs" fill="#fff" stroke="#fff" stroke-width="3.4" stroke-linejoin="round" aria-hidden="true">7 ms</text>
<text x="405.88" y="988" font-size="13.1" text-anchor="middle" textLength="29.2159" lengthAdjust="spacingAndGlyphs" fill="#000" fill-opacity="0.92" aria-hidden="true">7 ms</text>
<text x="404.98" y="987.1" font-size="13.1" text-anchor="middle" textLength="29.2159" lengthAdjust="spacingAndGlyphs" fill="#111">7 ms</text>
<text x="580.27" y="987.55" font-size="13.1" text-anchor="middle" textLength="47.958" lengthAdjust="spacingAndGlyphs" fill="#fff" stroke="#fff" stroke-width="3.4" stroke-linejoin="round" aria-hidden="true">10.5 ms</text>
<text x="580.72" y="988" font-size="13.1" text-anchor="middle" textLength="47.958" lengthAdjust="spacingAndGlyphs" fill="#000" fill-opacity="0.92" aria-hidden="true">10.5 ms</text>
<text x="579.82" y="987.1" font-size="13.1" text-anchor="middle" textLength="47.958" lengthAdjust="spacingAndGlyphs" fill="#111">10.5 ms</text>
<text x="755.11" y="987.55" font-size="13.1" text-anchor="middle" textLength="36.7142" lengthAdjust="spacingAndGlyphs" fill="#fff" stroke="#fff" stroke-width="3.4" stroke-linejoin="round" aria-hidden="true">14 ms</text>
<text x="755.56" y="988" font-size="13.1" text-anchor="middle" textLength="36.7142" lengthAdjust="spacingAndGlyphs" fill="#000" fill-opacity="0.92" aria-hidden="true">14 ms</text>
<text x="754.66" y="987.1" font-size="13.1" text-anchor="middle" textLength="36.7142" lengthAdjust="spacingAndGlyphs" fill="#111">14 ms</text>
<text x="929.95" y="987.55" font-size="13.1" text-anchor="middle" textLength="47.958" lengthAdjust="spacingAndGlyphs" fill="#fff" stroke="#fff" stroke-width="3.4" stroke-linejoin="round" aria-hidden="true">17.5 ms</text>
<text x="930.4" y="988" font-size="13.1" text-anchor="middle" textLength="47.958" lengthAdjust="spacingAndGlyphs" fill="#000" fill-opacity="0.92" aria-hidden="true">17.5 ms</text>
<text x="929.5" y="987.1" font-size="13.1" text-anchor="middle" textLength="47.958" lengthAdjust="spacingAndGlyphs" fill="#111">17.5 ms</text>
<text x="1104.79" y="987.55" font-size="13.1" text-anchor="middle" textLength="36.7142" lengthAdjust="spacingAndGlyphs" fill="#fff" stroke="#fff" stroke-width="3.4" stroke-linejoin="round" aria-hidden="true">21 ms</text>
<text x="1105.24" y="988" font-size="13.1" text-anchor="middle" textLength="36.7142" lengthAdjust="spacingAndGlyphs" fill="#000" fill-opacity="0.92" aria-hidden="true">21 ms</text>
<text x="1104.34" y="987.1" font-size="13.1" text-anchor="middle" textLength="36.7142" lengthAdjust="spacingAndGlyphs" fill="#111">21 ms</text>
<text x="1279.63" y="987.55" font-size="13.1" text-anchor="middle" textLength="47.958" lengthAdjust="spacingAndGlyphs" fill="#fff" stroke="#fff" stroke-width="3.4" stroke-linejoin="round" aria-hidden="true">24.5 ms</text>
<text x="1280.08" y="988" font-size="13.1" text-anchor="middle" textLength="47.958" lengthAdjust="spacingAndGlyphs" fill="#000" fill-opacity="0.92" aria-hidden="true">24.5 ms</text>
<text x="1279.18" y="987.1" font-size="13.1" text-anchor="middle" textLength="47.958" lengthAdjust="spacingAndGlyphs" fill="#111">24.5 ms</text>
<text x="1454.47" y="987.55" font-size="13.1" text-anchor="middle" textLength="36.7142" lengthAdjust="spacingAndGlyphs" fill="#fff" stroke="#fff" stroke-width="3.4" stroke-linejoin="round" aria-hidden="true">28 ms</text>
<text x="1454.92" y="988" font-size="13.1" text-anchor="middle" textLength="36.7142" lengthAdjust="spacingAndGlyphs" fill="#000" fill-opacity="0.92" aria-hidden="true">28 ms</text>
<text x="1454.02" y="987.1" font-size="13.1" text-anchor="middle" textLength="36.7142" lengthAdjust="spacingAndGlyphs" fill="#111">28 ms</text>
<text x="1629.31" y="987.55" font-size="13.1" text-anchor="middle" textLength="47.958" lengthAdjust="spacingAndGlyphs" fill="#fff" stroke="#fff" stroke-width="3.4" stroke-linejoin="round" aria-hidden="true">31.5 ms</text>
<text x="1629.76" y="988" font-size="13.1" text-anchor="middle" textLength="47.958" lengthAdjust="spacingAndGlyphs" fill="#000" fill-opacity="0.92" aria-hidden="true">31.5 ms</text>
<text x="1628.86" y="987.1" font-size="13.1" text-anchor="middle" textLength="47.958" lengthAdjust="spacingAndGlyphs" fill="#111">31.5 ms</text>
</g>
<text x="101.95" y="121.25" font-size="19.24" textLength="98" lengthAdjust="spacingAndGlyphs" fill="#fff" stroke="#fff" stroke-width="3" stroke-linejoin="round" aria-hidden="true">U_loop,coil</text>
<text x="101.65" y="238.55" font-size="19.24" textLength="78" lengthAdjust="spacingAndGlyphs" fill="#fff" stroke="#fff" stroke-width="3" stroke-linejoin="round" aria-hidden="true">U_Bt,coil</text>
<text x="54.45" y="355.45" font-size="19.24" textLength="92" lengthAdjust="spacingAndGlyphs" fill="#fff" stroke="#fff" stroke-width="3" stroke-linejoin="round" aria-hidden="true">U_Rog,coil</text>
<text x="101.45" y="472.45" font-size="19.24" textLength="87" lengthAdjust="spacingAndGlyphs" fill="#fff" stroke="#fff" stroke-width="3" stroke-linejoin="round" aria-hidden="true">U_Photod</text>
<text x="53.95" y="589.25" font-size="19.24" textLength="102.5" lengthAdjust="spacingAndGlyphs" fill="#fff" stroke="#fff" stroke-width="3" stroke-linejoin="round" aria-hidden="true">U_Diamagn</text>
<text x="100.95" y="706.25" font-size="19.24" textLength="63.5" lengthAdjust="spacingAndGlyphs" fill="#fff" stroke="#fff" stroke-width="3" stroke-linejoin="round" aria-hidden="true">Trigger</text>
<text x="54.05" y="865.75" font-size="19.24" textLength="28" lengthAdjust="spacingAndGlyphs" fill="#fff" stroke="#fff" stroke-width="3" stroke-linejoin="round" aria-hidden="true">B_t</text>
<text x="53.85" y="897.05" font-size="19.24" textLength="26" lengthAdjust="spacingAndGlyphs" fill="#fff" stroke="#fff" stroke-width="3" stroke-linejoin="round" aria-hidden="true">I_p</text>
<g clip-path="url(#cpPlot)">
<path d="M3.5,160.5 L55.5,160.5 L55.5,159.5 L56.5,159.5 L56.5,158.5 L57.5,158.5 L57.5,157.5 L58.5,157.5 L58.5,156.5 L59.5,156.5 L59.5,155.5 L60.5,155.5 L60.5,154.5 L62.5,154.5 L62.5,153.5 L63.5,153.5 L63.5,152.5 L65.5,152.5 L65.5,151.5 L66.5,151.5 L66.5,150.5 L68.5,150.5 L68.5,149.5 L70.5,149.5 L70.5,148.5 L72.5,148.5 L72.5,147.5 L74.5,147.5 L74.5,146.5 L76.5,146.5 L76.5,145.5 L78.5,145.5 L78.5,144.5 L81.5,144.5 L81.5,143.5 L83.5,143.5 L83.5,142.5 L86.5,142.5 L86.5,141.5 L89.5,141.5 L89.5,140.5 L92.5,140.5 L92.5,139.5 L95.5,139.5 L95.5,138.5 L98.5,138.5 L98.5,137.5 L101.5,137.5 L101.5,136.5 L104.5,136.5 L104.5,135.5 L108.5,135.5 L108.5,134.5 L111.5,134.5 L111.5,133.5 L114.5,133.5 L114.5,132.5 L118.5,132.5 L118.5,131.5 L120.5,131.5 L120.5,130.5 L123.5,130.5 L123.5,129.5 L126.5,129.5 L126.5,128.5 L130.5,128.5 L130.5,127.5 L135.5,127.5 L135.5,126.5 L140.5,126.5 L140.5,125.5 L146.5,125.5 L146.5,124.5 L152.5,124.5 L152.5,123.5 L158.5,123.5 L158.5,122.5 L167.5,122.5 L167.5,121.5 L177.5,121.5 L177.5,120.5 L187.5,120.5 L187.5,119.5 L200.5,119.5 L200.5,118.5 L213.5,118.5 L213.5,117.5 L229.5,117.5 L229.5,116.5 L315.5,116.5 L315.5,117.5 L317.5,117.5 L317.5,118.5 L370.5,118.5 L370.5,119.5 L404.5,119.5 L404.5,120.5 L424.5,120.5 L424.5,121.5 L437.5,121.5 L437.5,122.5 L450.5,122.5 L450.5,123.5 L458.5,123.5 L458.5,124.5 L467.5,124.5 L467.5,125.5 L473.5,125.5 L473.5,126.5 L479.5,126.5 L479.5,127.5 L485.5,127.5 L485.5,128.5 L491.5,128.5 L491.5,129.5 L496.5,129.5 L496.5,130.5 L501.5,130.5 L501.5,131.5 L506.5,131.5 L506.5,132.5 L510.5,132.5 L510.5,133.5 L514.5,133.5 L514.5,134.5 L519.5,134.5 L519.5,135.5 L523.5,135.5 L523.5,136.5 L527.5,136.5 L527.5,137.5 L532.5,137.5 L532.5,138.5 L536.5,138.5 L536.5,139.5 L541.5,139.5 L541.5,140.5 L545.5,140.5 L545.5,141.5 L550.5,141.5 L550.5,142.5 L556.5,142.5 L556.5,143.5 L561.5,143.5 L561.5,144.5 L567.5,144.5 L567.5,145.5 L574.5,145.5 L574.5,146.5 L581.5,146.5 L581.5,147.5 L591.5,147.5 L591.5,148.5 L601.5,148.5 L601.5,149.5 L613.5,149.5 L613.5,150.5 L645.5,150.5 L645.5,151.5 L693.5,151.5 L693.5,152.5 L760.5,152.5 L760.5,153.5 L860.5,153.5 L860.5,154.5 L960.5,154.5 L960.5,155.5 L1091.5,155.5 L1091.5,156.5 L1193.5,156.5 L1193.5,157.5 L1367.5,157.5 L1367.5,158.5 L1567.5,158.5 L1567.5,159.5 L1751.5,159.5" fill="none" stroke="#000000" stroke-width="1.1" stroke-linejoin="round" />
<path d="M115,132.5v1.6M127,128.4v1.6M239,116.2v1.6M286,115.9v-1.6M316,117.3v-1.6M407,120.7v1.6M630,150.3v-1.6M700,151.8v-1.6M852,153.6v-1.6M868,153.8v-1.6M985,154.9v1.6M1005,155.0v1.6M1102,155.8v-1.6M1118,156.0v-1.6M1160,156.4v-1.6M1505,158.5v1.6M1512,158.5v-1.6M1540,158.6v-1.6M1555,158.7v1.6M1560,158.7v-1.6" stroke="#000000" stroke-width="1" fill="none"/>
<path d="M12.5,232.5 L55.5,232.5 L55.5,219.5 L56.5,219.5 L56.5,217.5 L57.5,217.5 L57.5,216.5 L58.5,216.5 L58.5,219.5 L62.5,219.5 L62.5,220.5 L80.5,220.5 L80.5,221.5 L148.5,221.5 L148.5,222.5 L202.5,222.5 L202.5,223.5 L250.5,223.5 L250.5,224.5 L300.5,224.5 L300.5,225.5 L360.5,225.5 L360.5,226.5 L432.5,226.5 L432.5,227.5 L505.5,227.5 L505.5,228.5 L569.5,228.5 L569.5,229.5 L640.5,229.5 L640.5,230.5 L712.5,230.5 L712.5,231.5 L775.5,231.5 L775.5,232.5 L827.5,232.5 L827.5,233.5 L878.5,233.5 L878.5,234.5 L929.5,234.5 L929.5,235.5 L985.5,235.5 L985.5,236.5 L1041.5,236.5 L1041.5,237.5 L1097.5,237.5 L1097.5,238.5 L1153.5,238.5 L1153.5,239.5 L1210.5,239.5 L1210.5,240.5 L1266.5,240.5 L1266.5,241.5 L1322.5,241.5 L1322.5,242.5 L1378.5,242.5 L1378.5,243.5 L1433.5,243.5 L1433.5,244.5 L1489.5,244.5 L1489.5,245.5 L1546.5,245.5 L1546.5,246.5 L1603.5,246.5 L1603.5,247.5 L1660.5,247.5 L1660.5,248.5 L1717.5,248.5 L1717.5,249.5 L1751.5,249.5" fill="none" stroke="#1fbfc8" stroke-width="1.2" stroke-linejoin="round" />
<path d="M55.5,206V221M56.5,213.5V220M57.5,216V220.5M58.5,218V220.5M92,217.7V223.7M115,218.5V223.5M125.5,217.2V223.7M129,218.7V221.7M174,221.4V226.4M200,220.4V238.4M542,225.6V231.6M92,218.2l3.2,3l-3.2,1.6M115,218.5l3.2,3l-3.2,1.6M125.5,218.7l3.2,3l-3.2,1.6M200,219.9l3.2,3l-3.2,1.6" stroke="#1fbfc8" stroke-width="1.1" fill="#1fbfc8" stroke-linejoin="round"/>
<path d="M3.0,349.5 L54.5,349.5 L55.0,337.5 L55.4,372.5 L56.5,366.0 L58.0,359.0 L60.0,354.5 L62.5,352.0 L66.0,350.3 L80.0,349.4 L160.0,349.0 L199.0,349.0 L300.0,348.9 L440.0,348.3 L480.0,347.8 L520.0,347.6 L540.0,348.4 L600.0,348.6 L628.0,349.2 L700.0,349.5 L1751.0,349.5" fill="none" stroke="#e5294e" stroke-width="1.1" stroke-linejoin="round" />
<path d="M55.2,351.5L63,351.8L59.5,356L57.3,362L55.4,372.5Z" fill="#e5294e" stroke="#e5294e" stroke-width="0.8"/>
<path d="M200,343.5l1.6,2l2.4,2.6l1.5,1.2l-1.5,1.2l-2.4,2.4l-1.6,2.2Z" fill="#e5294e" stroke="#e5294e" stroke-width="0.6"/>
<path d="M163,347.8v2.2M176,347.8v2.2M186,347.8v2.2M222,347.8v2.2M326,347.6v2.2M362,347.4v2.2M366,347.4v2.2M372,347.4v2.2M398,347.3v2.2M408,347.2v2.2M452,347.0v2.2M456,346.9v2.2M485,346.6v2.2M492,346.5v2.2M513,346.4v2.2M520,346.4v2.2M545,347.2v2.2M552,347.2v2.2M575,347.3v2.2" stroke="#e5294e" stroke-width="1.6" fill="none"/>
<path d="M153,349.5H1715" stroke="#3a3a3a" stroke-width="1" stroke-dasharray="5 5" fill="none" shape-rendering="crispEdges"/>
<path d="M3,477.6H1751" stroke="#7cc21e" stroke-width="1.3" fill="none"/>
<path d="M3,583.5H1751" stroke="#f7941e" stroke-width="1.2" fill="none"/>
<path d="M43,583.5H1721" stroke="#3a3a3a" stroke-width="1" stroke-dasharray="5 5" fill="none" shape-rendering="crispEdges"/>
<path d="M3,746H55.3V654.5H199.5L200,643.5L201.3,650L202,654.5H1751" stroke="#2323b4" stroke-width="1.2" fill="none" stroke-linejoin="miter"/>
<path d="M3,746.5H53" stroke="#3a3a3a" stroke-width="1" stroke-dasharray="5 5" fill="none" shape-rendering="crispEdges"/>
<path d="M3,771.3H29.5L30.5,772.6H55L56.2,770L57.6,767.5L58.6,763L59.2,759" stroke="#e38a1c" stroke-width="1.2" fill="none"/>
<path d="M40.5,890.5 L55.5,890.5 L55.5,897.5 L56.5,897.5 L56.5,892.5 L57.5,892.5 L57.5,893.5 L58.5,893.5 L58.5,894.5 L59.5,894.5 L59.5,895.5 L105.5,895.5 L105.5,891.5 L107.5,891.5 L107.5,892.5 L114.5,892.5 L114.5,893.5 L117.5,893.5 L117.5,894.5 L118.5,894.5 L118.5,895.5 L119.5,895.5 L119.5,893.5 L127.5,893.5 L127.5,888.5 L128.5,888.5 L128.5,896.5 L131.5,896.5 L131.5,893.5 L166.5,893.5 L166.5,894.5 L180.5,894.5 L180.5,895.5 L220.5,895.5 L220.5,896.5 L250.5,896.5 L250.5,897.5 L286.5,897.5 L286.5,898.5 L307.5,898.5 L307.5,897.5 L310.5,897.5 L310.5,896.5 L314.5,896.5 L314.5,895.5 L324.5,895.5 L324.5,896.5 L325.5,896.5 L325.5,897.5 L362.5,897.5 L362.5,898.5 L400.5,898.5 L400.5,899.5 L407.5,899.5 L407.5,900.5 L409.5,900.5 L409.5,901.5 L410.5,901.5 L410.5,902.5 L412.5,902.5 L412.5,903.5 L430.5,903.5 L430.5,904.5 L438.5,904.5 L438.5,905.5 L456.5,905.5 L456.5,906.5 L512.5,906.5 L512.5,907.5 L525.5,907.5 L525.5,908.5 L538.5,908.5 L538.5,909.5 L552.5,909.5 L552.5,910.5 L566.5,910.5 L566.5,911.5 L581.5,911.5 L581.5,912.5 L611.5,912.5 L611.5,913.5 L640.5,913.5 L640.5,914.5 L668.5,914.5 L668.5,915.5 L747.5,915.5 L747.5,916.5 L800.5,916.5 L800.5,917.5 L850.5,917.5 L850.5,918.5 L899.5,918.5 L899.5,919.5 L950.5,919.5 L950.5,920.5 L1003.5,920.5 L1003.5,921.5 L1056.5,921.5 L1056.5,922.5 L1109.5,922.5 L1109.5,923.5 L1163.5,923.5 L1163.5,924.5 L1217.5,924.5 L1217.5,925.5 L1272.5,925.5 L1272.5,926.5 L1326.5,926.5 L1326.5,927.5 L1380.5,927.5 L1380.5,928.5 L1435.5,928.5 L1435.5,929.5 L1489.5,929.5 L1489.5,930.5 L1535.5,930.5 L1535.5,931.5 L1578.5,931.5 L1578.5,932.5 L1621.5,932.5 L1621.5,933.5 L1664.5,933.5 L1664.5,934.5 L1708.5,934.5 L1708.5,935.5 L1750.5,935.5" fill="none" stroke="#6a2a8a" stroke-width="1.15" stroke-linejoin="round" />
</g>
<text x="102.4" y="121.7" font-size="19.24" textLength="98" lengthAdjust="spacingAndGlyphs" fill="#000" fill-opacity="0.92" aria-hidden="true">U_loop,coil</text>
<text x="101.5" y="120.8" font-size="19.24" textLength="98" lengthAdjust="spacingAndGlyphs" fill="#000">U_loop,coil</text>
<text x="102.1" y="239" font-size="19.24" textLength="78" lengthAdjust="spacingAndGlyphs" fill="#000" fill-opacity="0.92" aria-hidden="true">U_Bt,coil</text>
<text x="101.2" y="238.1" font-size="19.24" textLength="78" lengthAdjust="spacingAndGlyphs" fill="#1fc6ce">U_Bt,coil</text>
<text x="54.9" y="355.9" font-size="19.24" textLength="92" lengthAdjust="spacingAndGlyphs" fill="#000" fill-opacity="0.92" aria-hidden="true">U_Rog,coil</text>
<text x="54" y="355" font-size="19.24" textLength="92" lengthAdjust="spacingAndGlyphs" fill="#e5294e">U_Rog,coil</text>
<text x="101.9" y="472.9" font-size="19.24" textLength="87" lengthAdjust="spacingAndGlyphs" fill="#000" fill-opacity="0.92" aria-hidden="true">U_Photod</text>
<text x="101" y="472" font-size="19.24" textLength="87" lengthAdjust="spacingAndGlyphs" fill="#7cc21e">U_Photod</text>
<text x="54.4" y="589.7" font-size="19.24" textLength="102.5" lengthAdjust="spacingAndGlyphs" fill="#000" fill-opacity="0.92" aria-hidden="true">U_Diamagn</text>
<text x="53.5" y="588.8" font-size="19.24" textLength="102.5" lengthAdjust="spacingAndGlyphs" fill="#f7941e">U_Diamagn</text>
<text x="101.4" y="706.7" font-size="19.24" textLength="63.5" lengthAdjust="spacingAndGlyphs" fill="#000" fill-opacity="0.92" aria-hidden="true">Trigger</text>
<text x="100.5" y="705.8" font-size="19.24" textLength="63.5" lengthAdjust="spacingAndGlyphs" fill="#2323b4">Trigger</text>
<text x="54.5" y="866.2" font-size="19.24" textLength="28" lengthAdjust="spacingAndGlyphs" fill="#000" fill-opacity="0.92" aria-hidden="true">B_t</text>
<text x="53.6" y="865.3" font-size="19.24" textLength="28" lengthAdjust="spacingAndGlyphs" fill="#e38a1c">B_t</text>
<text x="54.3" y="897.5" font-size="19.24" textLength="26" lengthAdjust="spacingAndGlyphs" fill="#000" fill-opacity="0.92" aria-hidden="true">I_p</text>
<text x="53.4" y="896.6" font-size="19.24" textLength="26" lengthAdjust="spacingAndGlyphs" fill="#6a2a8a">I_p</text>
<path d="M9.5,102.5H77.6L83.8,115.6L77.6,128.7H9.5Q6.4,128.7 6.4,125.7V105.5Q6.4,102.5 9.5,102.5Z" fill="#e6e6e6" stroke="#222222" stroke-width="1.8" stroke-linejoin="round"/>
<path d="M33,102.5V128.7" stroke="#222222" stroke-width="1.8"/>
<text x="10.6" y="119" font-size="11.75" fill="#16162e" textLength="17.4" lengthAdjust="spacingAndGlyphs" stroke="#16162e" stroke-width="0.25">C 1</text>
<text x="57" y="119" font-size="11.75" fill="#16162e" text-anchor="middle" textLength="25.5708" lengthAdjust="spacingAndGlyphs" stroke="#16162e" stroke-width="0.25">20 V</text>
<path d="M9.5,219.8H77.6L83.8,232.9L77.6,246H9.5Q6.4,246 6.4,243V222.8Q6.4,219.8 9.5,219.8Z" fill="#e4f8f9" stroke="#27c2ca" stroke-width="1.8" stroke-linejoin="round"/>
<path d="M33,219.8V246" stroke="#27c2ca" stroke-width="1.8"/>
<text x="10.6" y="236.3" font-size="11.75" fill="#101820" textLength="17.4" lengthAdjust="spacingAndGlyphs" stroke="#101820" stroke-width="0.25">C 2</text>
<text x="57" y="236.3" font-size="11.75" fill="#101820" text-anchor="middle" textLength="42.8388" lengthAdjust="spacingAndGlyphs" stroke="#101820" stroke-width="0.25">300 mV</text>
<path d="M9.5,337.1H31.5L41.8,349.9L31.5,362.7H9.5Q6.4,362.7 6.4,359.7V340.1Q6.4,337.1 9.5,337.1Z" fill="#fde9ec" stroke="#ea5870" stroke-width="1.5" stroke-linejoin="round"/>
<text x="14.6" y="353.4" font-size="11.75" fill="#e8405c" textLength="17.8" lengthAdjust="spacingAndGlyphs" stroke="#e8405c" stroke-width="0.25">C 3</text>
<path d="M9.5,453.3H77.6L83.8,466.4L77.6,479.5H9.5Q6.4,479.5 6.4,476.5V456.3Q6.4,453.3 9.5,453.3Z" fill="#eef8e0" stroke="#7cc21e" stroke-width="1.8" stroke-linejoin="round"/>
<path d="M33,453.3V479.5" stroke="#7cc21e" stroke-width="1.8"/>
<text x="10.6" y="469.8" font-size="11.75" fill="#101810" textLength="17.4" lengthAdjust="spacingAndGlyphs" stroke="#101810" stroke-width="0.25">C 4</text>
<text x="57" y="469.8" font-size="11.75" fill="#101810" text-anchor="middle" textLength="42.8388" lengthAdjust="spacingAndGlyphs" stroke="#101810" stroke-width="0.25">200 mV</text>
<path d="M9.5,571H31.5L41.8,583.8L31.5,596.6H9.5Q6.4,596.6 6.4,593.6V574Q6.4,571 9.5,571Z" fill="#fef0e0" stroke="#f7a040" stroke-width="1.5" stroke-linejoin="round"/>
<text x="14.6" y="587.3" font-size="11.75" fill="#202020" textLength="17.8" lengthAdjust="spacingAndGlyphs" stroke="#202020" stroke-width="0.25">C 5</text>
<path d="M9.5,687.3H77.6L83.8,700.4L77.6,713.5H9.5Q6.4,713.5 6.4,710.5V690.3Q6.4,687.3 9.5,687.3Z" fill="#e6e6f8" stroke="#2a2ac8" stroke-width="1.8" stroke-linejoin="round"/>
<path d="M33,687.3V713.5" stroke="#2a2ac8" stroke-width="1.8"/>
<text x="10.6" y="703.8" font-size="11.75" fill="#2a2ac0" textLength="17.4" lengthAdjust="spacingAndGlyphs" stroke="#2a2ac0" stroke-width="0.25">C 6</text>
<text x="57" y="703.8" font-size="11.75" fill="#2a2ac0" text-anchor="middle" textLength="18.6576" lengthAdjust="spacingAndGlyphs" stroke="#2a2ac0" stroke-width="0.25">3 V</text>
<path d="M9.5,852H31.5L41.8,863.5L31.5,875H9.5Q6.4,875 6.4,872V855Q6.4,852 9.5,852Z" fill="#fef3e6" stroke="#f7a648" stroke-width="1.3" stroke-linejoin="round"/>
<text x="13" y="866.7" font-size="11.75" fill="#101010" textLength="20.4" lengthAdjust="spacingAndGlyphs" stroke="#101010" stroke-width="0.25">M 1</text>
<path d="M9.5,877.7H31.5L41.8,889L31.5,900.3H9.5Q6.4,900.3 6.4,897.3V880.7Q6.4,877.7 9.5,877.7Z" fill="#6a2a8a" stroke="#2a1238" stroke-width="1.2" stroke-linejoin="round"/>
<text x="13" y="891.8" font-size="11.75" fill="#ffffff" textLength="20.4" lengthAdjust="spacingAndGlyphs" stroke="#ffffff" stroke-width="0.25">M 2</text>
<path d="M46.2,644.1H63.7V662.5H58.9L55,669.2L51.1,662.5H46.2Z" fill="#000" stroke="#f58a1f" stroke-width="2.4" stroke-linejoin="miter"/>
<text x="55.1" y="658.9" font-size="14.77" fill="#f58a1f" text-anchor="middle" stroke="#f58a1f" stroke-width="0.6">T</text>
<path d="M1729.4,700.3L1742.6,690.4V698.6H1751V702.2H1742.6V710.4Z" fill="#2424bb"/>
<path d="M1711.2,64.8H1743.4Q1745.2,64.8 1745.2,66.6V97.6Q1745.2,100.4 1743,98.4L1710.2,66.8Q1709,64.8 1711.2,64.8Z" fill="#4d4d4d" stroke="#111" stroke-width="1.5" stroke-linejoin="round"/>
<circle cx="1737.2" cy="71.5" r="3.9" fill="none" stroke="#a0a0a0" stroke-width="1.5"/>
<path d="M1733.8,75L1729,79.8" stroke="#a0a0a0" stroke-width="2.7" stroke-linecap="round"/>
<circle cx="1761.8" cy="504" r="2.1" fill="#c4c4c4"/>
<circle cx="1761.8" cy="512.3" r="2.1" fill="#c4c4c4"/>
<circle cx="1761.8" cy="520.7" r="2.1" fill="#c4c4c4"/>
</g>
<g id="brand-logo">
<clipPath id="cpT"><rect x="1780" y="0" width="56.5" height="29"/></clipPath>
<g clip-path="url(#cpT)"><text x="1785.4 1796.5 1812.2 1828.8" y="25.6" font-size="29.8" font-weight="700" fill="#ffffff" stroke="#ffffff" stroke-width="0.45"><tspan font-size="31.2">T</tspan>ekt</text></g>
<text x="1837.9 1847.3 1864.1 1879.9 1887.8" y="25.6" font-size="29.8" font-weight="700" fill="#ffffff" stroke="#ffffff" stroke-width="0.45">ronix</text>
<path d="M1826.5,14.5L1831,8.5V16Z" fill="#2f2f2f"/>
<path d="M1830.8,11.2L1836.5,4.4V11.2Z" fill="#ffffff"/>
<path d="M1814.7,25.9H1821.6L1830.6,9.5H1824.4Z" fill="#1fb9de"/>
</g>
<g id="add-new-panel">
<path d="M1920,29.5H1769.5V995.5H1920" fill="none" stroke="#665f5a" stroke-width="1"/>
<text x="1844.6" y="43.7" font-size="14.56" fill="#f2f2f2" text-anchor="middle" font-weight="700" textLength="84.5" lengthAdjust="spacingAndGlyphs">Add New...</text>
<rect x="1778.5" y="54.5" width="62" height="36" fill="url(#gBtn)" rx="6.5" stroke="#6b635d" stroke-width="1"/>
<rect x="1850.5" y="54.5" width="62" height="36" fill="url(#gBtn)" rx="6.5" stroke="#6b635d" stroke-width="1"/>
<rect x="1778.5" y="100.5" width="62" height="36" fill="url(#gBtn)" rx="6.5" stroke="#6b635d" stroke-width="1"/>
<rect x="1850.5" y="100.5" width="62" height="36" fill="url(#gBtn)" rx="6.5" stroke="#6b635d" stroke-width="1"/>
<rect x="1778.5" y="146.5" width="62" height="36" fill="url(#gBtn)" rx="6.5" stroke="#6b635d" stroke-width="1"/>
<rect x="1850.5" y="146.5" width="62" height="36" fill="url(#gBtn)" rx="6.5" stroke="#6b635d" stroke-width="1"/>
<rect x="1778.5" y="196.5" width="62" height="36" fill="url(#gBtn)" rx="6.5" stroke="#6b635d" stroke-width="1"/>
<rect x="1850.5" y="196.5" width="62" height="36" fill="url(#gBtn)" rx="6.5" stroke="#6b635d" stroke-width="1"/>
<text x="1809.8" y="76.9" font-size="15.18" fill="#f4f4f4" text-anchor="middle" textLength="50.5" lengthAdjust="spacingAndGlyphs">Cursors</text>
<text x="1881.4" y="76.9" font-size="15.18" fill="#f4f4f4" text-anchor="middle" textLength="50" lengthAdjust="spacingAndGlyphs">Callout</text>
<text x="1809.6" y="122.7" font-size="15.18" fill="#f4f4f4" text-anchor="middle" textLength="59.5" lengthAdjust="spacingAndGlyphs">Measure</text>
<text x="1881.4" y="122.7" font-size="15.18" fill="#f4f4f4" text-anchor="middle" textLength="46.5" lengthAdjust="spacingAndGlyphs">Search</text>
<text x="1809.5" y="160.9" font-size="15.18" fill="#f4f4f4" text-anchor="middle" textLength="48.5" lengthAdjust="spacingAndGlyphs">Results</text>
<text x="1810" y="176.8" font-size="15.18" fill="#f4f4f4" text-anchor="middle" textLength="36.5" lengthAdjust="spacingAndGlyphs">Table</text>
<text x="1881.6" y="168.6" font-size="15.18" fill="#f4f4f4" text-anchor="middle" textLength="28.5" lengthAdjust="spacingAndGlyphs">Plot</text>
<text x="1881.6" y="219" font-size="15.18" fill="#f4f4f4" text-anchor="middle" textLength="50.5" lengthAdjust="spacingAndGlyphs">More...</text>
<path d="M1773,189.5H1917M1773,241.5H1917" stroke="#665f5a" stroke-width="1"/>
<path d="M1797,203.3H1800.2M1803.1,203.3H1807.5M1810.4,203.3H1814.7M1817.6,203.3H1821M1797,221.5H1800.2M1803.1,221.5H1807.5M1810.4,221.5H1814.7M1817.6,221.5H1821M1798.3,207.3V210.8M1798.3,213.6V217.1M1819.7,207.3V210.8M1819.7,213.6V217.1" fill="none" stroke="#c6c6c6" stroke-width="2.6"/>
<circle cx="1811.1" cy="211" r="4.3" fill="#2d2d2d" stroke="#c2c2c2" stroke-width="1.7"/>
<path d="M1807.4,214.6L1803,217" stroke="#c2c2c2" stroke-width="2.7" stroke-linecap="round"/>
<path d="M1815.2,217.1L1817.3,225.9L1819.2,224.2L1821.3,226.6L1822.9,225.2L1821,223.1L1823.5,221.9Z" fill="#b6b6b6"/>
</g>
<g id="settings-bar">
<path d="M3,988.2Q3,984.2 7,984.2H89Q93,984.2 93,988.2V1073.8Q93,1078.8 88,1078.8H8Q3,1078.8 3,1073.8Z" fill="#c8c8c8"/>
<path d="M3,988.2Q3,984.2 7,984.2H89Q93,984.2 93,988.2V1003.0H3Z" fill="#1e1e1e"/>
<text x="8.4" y="997.6" font-size="15.39" fill="#fbee38" textLength="28.8" lengthAdjust="spacingAndGlyphs" stroke="#fbee38" stroke-width="0.3">Ch 1</text>
<rect x="3" y="1005.2" width="90" height="16.8" fill="#ff0000"/>
<rect x="3" y="1003" width="90" height="2.2" fill="#a9a9a9"/>
<path d="M10.9,1006.8L18.4,1020.5H3.4Z" fill="#ffee00" stroke="#2a2a5a" stroke-width="0.9" stroke-linejoin="round"/>
<path d="M10.9,1009.6V1018.8" stroke="#8c8a3c" stroke-width="1.7"/>
<text x="19.2" y="1017.4" font-size="15.18" fill="#ffffff" textLength="58.2" lengthAdjust="spacingAndGlyphs" stroke="#ffffff" stroke-width="0.25">Clipping</text>
<text x="8.3" y="1036.6" font-size="14.46" fill="#000000" textLength="44.4072" lengthAdjust="spacingAndGlyphs">5 V/div</text>
<text x="8.3" y="1055.6" font-size="14.46" fill="#000000" textLength="35.0734" lengthAdjust="spacingAndGlyphs">1 MΩ</text>
<text x="8.3" y="1074.5" font-size="14.46" fill="#000000" textLength="53.287" lengthAdjust="spacingAndGlyphs">200 kHz</text>
<text x="74.4" y="1070.2" font-size="9.57" fill="#000" stroke="#000" stroke-width="0.35">B</text>
<text x="80.2" y="1072.6" font-size="9.36" fill="#000" stroke="#000" stroke-width="0.35">w</text>
<path d="M98,988.2Q98,984.2 102,984.2H184Q188,984.2 188,988.2V1073.8Q188,1078.8 183,1078.8H103Q98,1078.8 98,1073.8Z" fill="#c8c8c8"/>
<path d="M98,988.2Q98,984.2 102,984.2H184Q188,984.2 188,988.2V1003.0H98Z" fill="#1d4041"/>
<text x="103.4" y="997.6" font-size="15.39" fill="#25c8d2" textLength="28.8" lengthAdjust="spacingAndGlyphs" stroke="#25c8d2" stroke-width="0.3">Ch 2</text>
<rect x="98" y="1005.2" width="90" height="16.8" fill="#ff0000"/>
<rect x="98" y="1003" width="90" height="2.2" fill="#a9a9a9"/>
<path d="M105.9,1006.8L113.4,1020.5H98.4Z" fill="#ffee00" stroke="#2a2a5a" stroke-width="0.9" stroke-linejoin="round"/>
<path d="M105.9,1009.6V1018.8" stroke="#8c8a3c" stroke-width="1.7"/>
<text x="114.2" y="1017.4" font-size="15.18" fill="#ffffff" textLength="58.2" lengthAdjust="spacingAndGlyphs" stroke="#ffffff" stroke-width="0.25">Clipping</text>
<text x="103.3" y="1036.6" font-size="14.46" fill="#000000" textLength="72.6649" lengthAdjust="spacingAndGlyphs">250 mV/div</text>
<text x="103.3" y="1055.6" font-size="14.46" fill="#000000" textLength="35.0734" lengthAdjust="spacingAndGlyphs">1 MΩ</text>
<text x="103.3" y="1074.5" font-size="14.46" fill="#000000" textLength="53.287" lengthAdjust="spacingAndGlyphs">200 kHz</text>
<text x="169.4" y="1070.2" font-size="9.57" fill="#000" stroke="#000" stroke-width="0.35">B</text>
<text x="175.2" y="1072.6" font-size="9.36" fill="#000" stroke="#000" stroke-width="0.35">w</text>
<path d="M193,988.2Q193,984.2 197,984.2H279Q283,984.2 283,988.2V1073.8Q283,1078.8 278,1078.8H198Q193,1078.8 193,1073.8Z" fill="#c8c8c8"/>
<path d="M193,988.2Q193,984.2 197,984.2H279Q283,984.2 283,988.2V1003.0H193Z" fill="#44252b"/>
<text x="198.4" y="997.6" font-size="15.39" fill="#f4f0f0" textLength="28.8" lengthAdjust="spacingAndGlyphs" stroke="#f4f0f0" stroke-width="0.3">Ch 3</text>
<rect x="193" y="1005.2" width="90" height="16.8" fill="#ff0000"/>
<rect x="193" y="1003" width="90" height="2.2" fill="#a9a9a9"/>
<path d="M200.9,1006.8L208.4,1020.5H193.4Z" fill="#ffee00" stroke="#2a2a5a" stroke-width="0.9" stroke-linejoin="round"/>
<path d="M200.9,1009.6V1018.8" stroke="#8c8a3c" stroke-width="1.7"/>
<text x="209.2" y="1017.4" font-size="15.18" fill="#ffffff" textLength="58.2" lengthAdjust="spacingAndGlyphs" stroke="#ffffff" stroke-width="0.25">Clipping</text>
<text x="198.3" y="1036.6" font-size="14.46" fill="#000000" textLength="72.6649" lengthAdjust="spacingAndGlyphs">450 mV/div</text>
<text x="198.3" y="1055.6" font-size="14.46" fill="#000000" textLength="35.0734" lengthAdjust="spacingAndGlyphs">1 MΩ</text>
<text x="198.3" y="1074.5" font-size="14.46" fill="#000000" textLength="53.287" lengthAdjust="spacingAndGlyphs">200 kHz</text>
<text x="264.4" y="1070.2" font-size="9.57" fill="#000" stroke="#000" stroke-width="0.35">B</text>
<text x="270.2" y="1072.6" font-size="9.36" fill="#000" stroke="#000" stroke-width="0.35">w</text>
<path d="M288,1007Q288,1003 292,1003H374Q378,1003 378,1007V1073.8Q378,1078.8 373,1078.8H293Q288,1078.8 288,1073.8Z" fill="#c8c8c8"/>
<path d="M288,1007Q288,1003 292,1003H374Q378,1003 378,1007V1021.8H288Z" fill="#364325"/>
<text x="293.4" y="1016.4" font-size="15.39" fill="#8ed42d" textLength="28.8" lengthAdjust="spacingAndGlyphs" stroke="#8ed42d" stroke-width="0.3">Ch 4</text>
<text x="293.3" y="1036.6" font-size="14.46" fill="#000000" textLength="72.6649" lengthAdjust="spacingAndGlyphs">200 mV/div</text>
<text x="293.3" y="1055.6" font-size="14.46" fill="#000000" textLength="35.0734" lengthAdjust="spacingAndGlyphs">1 MΩ</text>
<text x="293.3" y="1074.5" font-size="14.46" fill="#000000" textLength="53.287" lengthAdjust="spacingAndGlyphs">200 kHz</text>
<text x="359.4" y="1070.2" font-size="9.57" fill="#000" stroke="#000" stroke-width="0.35">B</text>
<text x="365.2" y="1072.6" font-size="9.36" fill="#000" stroke="#000" stroke-width="0.35">w</text>
<path d="M383,1007Q383,1003 387,1003H469Q473,1003 473,1007V1073.8Q473,1078.8 468,1078.8H388Q383,1078.8 383,1073.8Z" fill="#c8c8c8"/>
<path d="M383,1007Q383,1003 387,1003H469Q473,1003 473,1007V1021.8H383Z" fill="#4c3521"/>
<text x="388.4" y="1016.4" font-size="15.39" fill="#f8982a" textLength="28.8" lengthAdjust="spacingAndGlyphs" stroke="#f8982a" stroke-width="0.3">Ch 5</text>
<text x="388.3" y="1036.6" font-size="14.46" fill="#000000" textLength="44.4072" lengthAdjust="spacingAndGlyphs">1 V/div</text>
<text x="388.3" y="1055.6" font-size="14.46" fill="#000000" textLength="35.0734" lengthAdjust="spacingAndGlyphs">1 MΩ</text>
<text x="388.3" y="1074.5" font-size="14.46" fill="#000000" textLength="53.287" lengthAdjust="spacingAndGlyphs">200 kHz</text>
<text x="454.4" y="1070.2" font-size="9.57" fill="#000" stroke="#000" stroke-width="0.35">B</text>
<text x="460.2" y="1072.6" font-size="9.36" fill="#000" stroke="#000" stroke-width="0.35">w</text>
<path d="M478,988.2Q478,984.2 482,984.2H564Q568,984.2 568,988.2V1073.8Q568,1078.8 563,1078.8H483Q478,1078.8 478,1073.8Z" fill="#c8c8c8"/>
<path d="M478,988.2Q478,984.2 482,984.2H564Q568,984.2 568,988.2V1003.0H478Z" fill="#1d1d47"/>
<text x="483.4" y="997.6" font-size="15.39" fill="#f0f0f8" textLength="28.8" lengthAdjust="spacingAndGlyphs" stroke="#f0f0f8" stroke-width="0.3">Ch 6</text>
<rect x="478" y="1005.2" width="90" height="16.8" fill="#ff0000"/>
<rect x="478" y="1003" width="90" height="2.2" fill="#a9a9a9"/>
<path d="M485.9,1006.8L493.4,1020.5H478.4Z" fill="#ffee00" stroke="#2a2a5a" stroke-width="0.9" stroke-linejoin="round"/>
<path d="M485.9,1009.6V1018.8" stroke="#8c8a3c" stroke-width="1.7"/>
<text x="494.2" y="1017.4" font-size="15.18" fill="#ffffff" textLength="58.2" lengthAdjust="spacingAndGlyphs" stroke="#ffffff" stroke-width="0.25">Clipping</text>
<text x="483.3" y="1036.6" font-size="14.46" fill="#000000" textLength="72.6649" lengthAdjust="spacingAndGlyphs">750 mV/div</text>
<text x="483.3" y="1055.6" font-size="14.46" fill="#000000" textLength="35.0734" lengthAdjust="spacingAndGlyphs">1 MΩ</text>
<text x="483.3" y="1074.5" font-size="14.46" fill="#000000" textLength="53.287" lengthAdjust="spacingAndGlyphs">200 kHz</text>
<text x="549.4" y="1070.2" font-size="9.57" fill="#000" stroke="#000" stroke-width="0.35">B</text>
<text x="555.2" y="1072.6" font-size="9.36" fill="#000" stroke="#000" stroke-width="0.35">w</text>
<path d="M573,988.2Q573,984.2 577,984.2H659Q663,984.2 663,988.2V1073.8Q663,1078.8 658,1078.8H578Q573,1078.8 573,1073.8Z" fill="#c8c8c8"/>
<path d="M573,988.2Q573,984.2 577,984.2H659Q663,984.2 663,988.2V1003.0H573Z" fill="#4c3521"/>
<text x="578.4" y="997.6" font-size="15.39" fill="#f0962a" textLength="48.4136" lengthAdjust="spacingAndGlyphs" stroke="#f0962a" stroke-width="0.3">Math 1</text>
<rect x="573" y="1005.2" width="90" height="16.8" fill="#ff0000"/>
<rect x="573" y="1003" width="90" height="2.2" fill="#a9a9a9"/>
<path d="M580.9,1006.8L588.4,1020.5H573.4Z" fill="#ffee00" stroke="#2a2a5a" stroke-width="0.9" stroke-linejoin="round"/>
<path d="M580.9,1009.6V1018.8" stroke="#8c8a3c" stroke-width="1.7"/>
<text x="589.2" y="1017.4" font-size="15.18" fill="#ffffff" textLength="67.3903" lengthAdjust="spacingAndGlyphs" stroke="#ffffff" stroke-width="0.25">Empty i…</text>
<text x="578.3" y="1036.6" font-size="14.46" fill="#000000" font-weight="700" textLength="82.1459" lengthAdjust="spacingAndGlyphs">75.4 mT/div</text>
<text x="578.3" y="1055.6" font-size="14.46" fill="#000000" textLength="75.0764" lengthAdjust="spacingAndGlyphs">Intg(Ch2)…</text>
<path d="M668,988.2Q668,984.2 672,984.2H754Q758,984.2 758,988.2V1073.8Q758,1078.8 753,1078.8H673Q668,1078.8 668,1073.8Z" fill="#c8c8c8"/>
<path d="M668,988.2Q668,984.2 672,984.2H754Q758,984.2 758,988.2V1003.0H668Z" fill="#6b2b8b"/>
<text x="673.4" y="997.6" font-size="15.39" fill="#ffffff" textLength="48.4136" lengthAdjust="spacingAndGlyphs" stroke="#ffffff" stroke-width="0.3">Math 2</text>
<rect x="668" y="1005.2" width="90" height="16.8" fill="#ff0000"/>
<rect x="668" y="1003" width="90" height="2.2" fill="#a9a9a9"/>
<path d="M675.9,1006.8L683.4,1020.5H668.4Z" fill="#ffee00" stroke="#2a2a5a" stroke-width="0.9" stroke-linejoin="round"/>
<path d="M675.9,1009.6V1018.8" stroke="#8c8a3c" stroke-width="1.7"/>
<text x="684.2" y="1017.4" font-size="15.18" fill="#ffffff" textLength="67.3903" lengthAdjust="spacingAndGlyphs" stroke="#ffffff" stroke-width="0.25">Empty i…</text>
<text x="673.3" y="1036.6" font-size="14.46" fill="#000000" font-weight="700" textLength="79.9225" lengthAdjust="spacingAndGlyphs">183.72 A/…</text>
<text x="673.3" y="1055.6" font-size="14.46" fill="#000000" textLength="75.0764" lengthAdjust="spacingAndGlyphs">-Intg(Ch3…</text>
<path d="M1119.5,1000V1080M1270.5,1000V1080M1812.5,1000V1080" stroke="#665f5a" stroke-width="1"/>
<rect x="1129.5" y="1000.5" width="39" height="77.5" fill="url(#gBtn)" rx="6" stroke="#6b635d" stroke-width="1"/>
<rect x="1133" y="1007.2" width="31.5" height="2" fill="#c9222c"/>
<text x="1149" y="1032.8" font-size="15.39" fill="#f0f0f0" text-anchor="middle" textLength="27.5" lengthAdjust="spacingAndGlyphs">Add</text>
<text x="1149" y="1048.9" font-size="15.39" fill="#f0f0f0" text-anchor="middle" textLength="29.5" lengthAdjust="spacingAndGlyphs">New</text>
<text x="1149" y="1065" font-size="15.39" fill="#f0f0f0" text-anchor="middle" textLength="34.5" lengthAdjust="spacingAndGlyphs">Math</text>
<rect x="1174.5" y="1000.5" width="39" height="77.5" fill="url(#gBtn)" rx="6" stroke="#6b635d" stroke-width="1"/>
<rect x="1178" y="1007.2" width="31.5" height="2" fill="#c2c6d4"/>
<text x="1194" y="1032.8" font-size="15.39" fill="#f0f0f0" text-anchor="middle" textLength="27.5" lengthAdjust="spacingAndGlyphs">Add</text>
<text x="1194" y="1048.9" font-size="15.39" fill="#f0f0f0" text-anchor="middle" textLength="29.5" lengthAdjust="spacingAndGlyphs">New</text>
<text x="1194" y="1065" font-size="15.39" fill="#f0f0f0" text-anchor="middle" textLength="21.5" lengthAdjust="spacingAndGlyphs">Ref</text>
<rect x="1219.5" y="1000.5" width="39" height="77.5" fill="url(#gBtn)" rx="6" stroke="#6b635d" stroke-width="1"/>
<rect x="1223" y="1007.2" width="31.5" height="2" fill="#c565f2"/>
<text x="1239" y="1032.8" font-size="15.39" fill="#f0f0f0" text-anchor="middle" textLength="27.5" lengthAdjust="spacingAndGlyphs">Add</text>
<text x="1239" y="1048.9" font-size="15.39" fill="#f0f0f0" text-anchor="middle" textLength="29.5" lengthAdjust="spacingAndGlyphs">New</text>
<text x="1239" y="1065" font-size="15.39" fill="#f0f0f0" text-anchor="middle" textLength="24" lengthAdjust="spacingAndGlyphs">Bus</text>
<rect x="1280.5" y="1004" width="199" height="74" rx="4" fill="#c8c8c8" stroke="#1a1a1a" stroke-width="1"/>
<path d="M1281.0,1008Q1281.0,1004.5 1284.5,1004.5H1475.5Q1479.0,1004.5 1479.0,1008V1022.6H1281.0Z" fill="#58595b"/>
<rect x="1281" y="1022.6" width="198" height="1.4" fill="#a4a4a4"/>
<text x="1285.5" y="1017.8" font-size="15.18" fill="#f2f2f2" textLength="74" lengthAdjust="spacingAndGlyphs">Horizontal</text>
<text x="1285.4" y="1036.7" font-size="14.46" fill="#000" textLength="66" lengthAdjust="spacingAndGlyphs">3.5 ms/div</text>
<text x="1285.4" y="1055.6" font-size="14.46" fill="#000" textLength="67.6" lengthAdjust="spacingAndGlyphs">SR: 1 MS/s</text>
<text x="1285.4" y="1074.5" font-size="14.46" fill="#000" textLength="70.6" lengthAdjust="spacingAndGlyphs">RL: 35 kpts</text>
<text x="1391.2" y="1036.7" font-size="14.46" fill="#000" textLength="39.2" lengthAdjust="spacingAndGlyphs">35 ms</text>
<text x="1391.4" y="1055.6" font-size="14.46" fill="#000" textLength="43.6" lengthAdjust="spacingAndGlyphs">1 µs/pt</text>
<text x="1405.4" y="1074.5" font-size="14.46" fill="#000" textLength="22.5" lengthAdjust="spacingAndGlyphs">3%</text>
<path d="M1391.8,1063.6H1399.4V1071.2H1397.3L1395.6,1074.6L1393.9,1071.2H1391.8Z" fill="#000" stroke="#f58a1f" stroke-width="1.2"/>
<text x="1395.6" y="1070.2" font-size="6.86" fill="#fff" text-anchor="middle" font-weight="700">T</text>
<rect x="1486.5" y="1004" width="157.5" height="74" rx="4" fill="#c8c8c8" stroke="#1a1a1a" stroke-width="1"/>
<path d="M1487.0,1008Q1487.0,1004.5 1490.5,1004.5H1640.0Q1643.5,1004.5 1643.5,1008V1022.6H1487.0Z" fill="#58595b"/>
<rect x="1487" y="1022.6" width="156.5" height="1.4" fill="#a4a4a4"/>
<text x="1491.5" y="1017.8" font-size="15.18" fill="#f2f2f2" textLength="48.8" lengthAdjust="spacingAndGlyphs">Trigger</text>
<rect x="1491" y="1025.2" width="28.6" height="15" rx="5" fill="#2222c4" stroke="#000" stroke-width="1"/>
<text x="1505.3" y="1037.5" font-size="14.14" fill="#ffffff" text-anchor="middle">6</text>
<path d="M1530,1037.4H1534.6L1540.6,1027.4H1546" fill="none" stroke="#3c3c9c" stroke-width="1.2"/>
<text x="1555.4" y="1036.9" font-size="14.46" fill="#000" textLength="22.2" lengthAdjust="spacingAndGlyphs">3 V</text>
<rect x="1651.5" y="1004" width="148" height="74" rx="4" fill="#c8c8c8" stroke="#1a1a1a" stroke-width="1"/>
<path d="M1652.0,1008Q1652.0,1004.5 1655.5,1004.5H1795.5Q1799.0,1004.5 1799.0,1008V1022.6H1652.0Z" fill="#58595b"/>
<rect x="1652" y="1022.6" width="147" height="1.4" fill="#a4a4a4"/>
<text x="1656.5" y="1017.8" font-size="15.18" fill="#f2f2f2" textLength="78" lengthAdjust="spacingAndGlyphs">Acquisition</text>
<text x="1654.6" y="1036.9" font-size="14.46" fill="#000" textLength="52.2" lengthAdjust="spacingAndGlyphs">Manual,</text>
<text x="1735.4" y="1036.9" font-size="14.46" fill="#000" textLength="50.6" lengthAdjust="spacingAndGlyphs">Analyze</text>
<text x="1654.6" y="1055.6" font-size="14.46" fill="#000" textLength="108.2" lengthAdjust="spacingAndGlyphs">High Res: 16 bits</text>
<text x="1654.6" y="1074.5" font-size="14.46" fill="#000" textLength="71.2" lengthAdjust="spacingAndGlyphs">Single: 1 /1</text>
<rect x="1822.5" y="1000.5" width="89" height="34" rx="7" fill="#ff1e27" stroke="#6a5a56" stroke-width="1"/>
<text x="1867" y="1020.2" font-size="13.73" fill="#ffffff" text-anchor="middle" font-weight="700" textLength="56.5" lengthAdjust="spacingAndGlyphs">Stopped</text>
<rect x="1822" y="1040.4" width="90" height="37.6" rx="5" fill="#c8c8c8"/>
<text x="1867" y="1055" font-size="14.98" fill="#000" text-anchor="middle" textLength="81" lengthAdjust="spacingAndGlyphs">30 Oct 2025</text>
<text x="1867.4" y="1072.2" font-size="14.98" fill="#000" text-anchor="middle" textLength="84.5" lengthAdjust="spacingAndGlyphs">11:58:45 AM</text>
</g>
</svg>
</body></html>
